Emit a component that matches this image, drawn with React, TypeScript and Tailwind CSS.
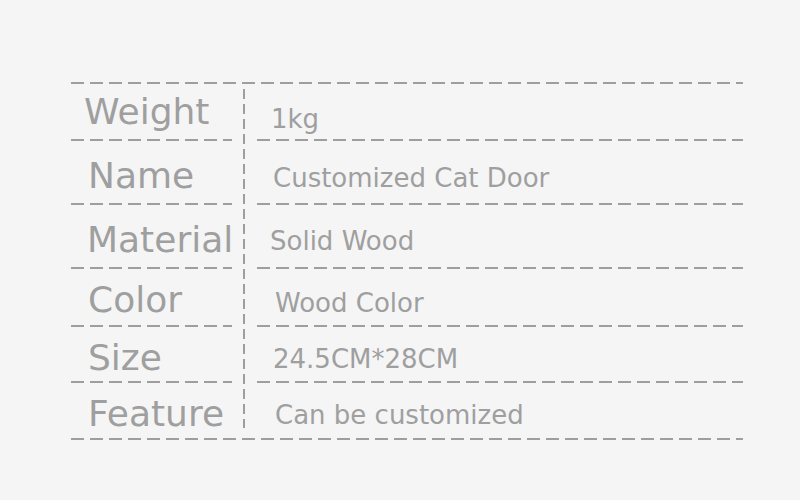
const dashH =
  "h-[2px] bg-[repeating-linear-gradient(90deg,#9e9e9e_0_13px,transparent_13px_19px)]";
const dashV =
  "w-[2px] bg-[repeating-linear-gradient(180deg,#9e9e9e_0_10px,transparent_10px_15px)]";

type Row = {
  label: string;
  value: string;
  h: string;
  labelPad: string;
  valuePad: string;
};

const rows: Row[] = [
  { label: "Weight", value: "1kg", h: "h-[55px]", labelPad: "pl-[13px]", valuePad: "pl-[14px] pt-[14px]" },
  { label: "Name", value: "Customized Cat Door", h: "h-[62px]", labelPad: "pl-[17px] pt-[8px]", valuePad: "pl-[16px] pt-[12px]" },
  { label: "Material", value: "Solid Wood", h: "h-[62px]", labelPad: "pl-[16px] pt-[7px]", valuePad: "pl-[13px] pt-[10px]" },
  { label: "Color", value: "Wood Color", h: "h-[56px]", labelPad: "pl-[17px] pt-[6px]", valuePad: "pl-[18px] pt-[11px]" },
  { label: "Size", value: "24.5CM*28CM", h: "h-[54px]", labelPad: "pl-[17px] pt-[7px]", valuePad: "pl-[16px] pt-[10px]" },
  { label: "Feature", value: "Can be customized", h: "h-[55px]", labelPad: "pl-[17px] pt-[6px]", valuePad: "pl-[18px] pt-[8px]" },
];

export default function App() {
  return (
    <div className="w-[800px] h-[500px] bg-[#f5f5f5] pt-[82px] pl-[71px] font-['DejaVu_Sans',sans-serif] text-[#9f9f9f]">
      <div className="w-[672px]">
        <div className={dashH} />
        <div className="flex">
          <div className="w-[161px] flex flex-col">
            {rows.map((r, i) => (
              <div key={r.label}>
                <div className={`${r.h} ${r.labelPad} flex items-center text-[36px] leading-none`}>
                  {r.label}
                </div>
                {i < rows.length - 1 && <div className={dashH} />}
              </div>
            ))}
          </div>
          <div className="w-[25px] flex pl-[11px] pt-[5px] pb-[10px]">
            <div className={dashV} />
          </div>
          <div className="flex-1 flex flex-col">
            {rows.map((r, i) => (
              <div key={r.label}>
                <div className={`${r.h} ${r.valuePad} flex items-center text-[26px] leading-none`}>
                  {r.value}
                </div>
                {i < rows.length - 1 && <div className={dashH} />}
              </div>
            ))}
          </div>
        </div>
        <div className={dashH} />
      </div>
    </div>
  );
}
